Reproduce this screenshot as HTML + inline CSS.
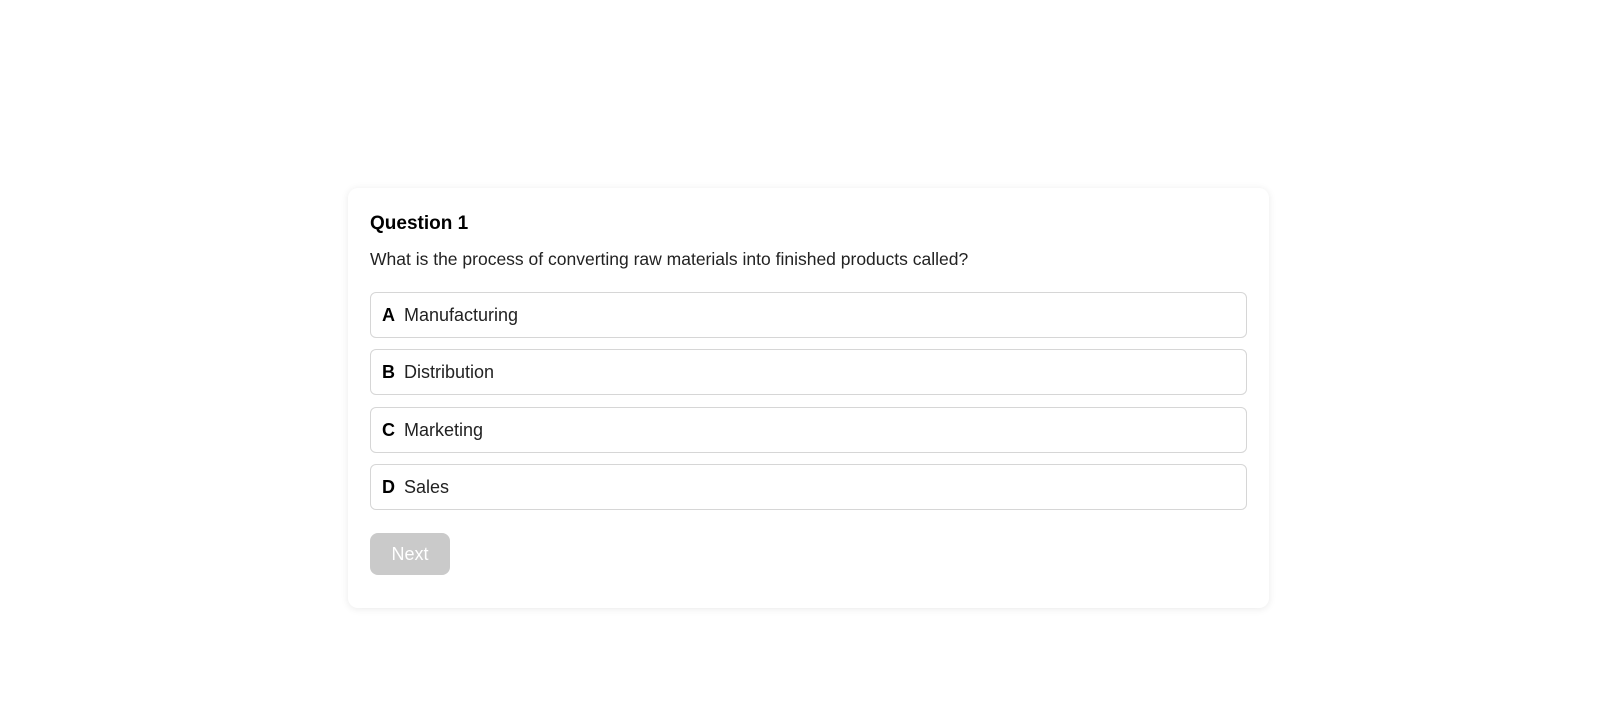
<!DOCTYPE html>
<html><head><style>
body{margin:0;background:#fff;font-family:"Liberation Sans",sans-serif;}
.card{position:absolute;left:348px;top:188px;width:921px;height:420px;background:#fff;border-radius:10px;box-shadow:0 1px 8px rgba(0,0,0,0.09);}
h2{position:absolute;left:22px;top:25px;margin:0;font-size:19px;font-weight:bold;color:#000;}
.q{position:absolute;left:22px;top:61px;font-size:17.5px;color:#222;}
.opt{position:absolute;left:22px;width:875px;height:44px;border:1px solid #d6d6d6;border-radius:6px;font-size:18px;color:#222;line-height:44px;}
.opt b{display:inline-block;margin-left:11px;margin-right:9px;color:#000;}
.btn{position:absolute;left:22px;top:345px;width:80px;height:42px;background:#cacaca;border-radius:8px;color:#fff;font-size:18px;text-align:center;line-height:42px;}
</style></head><body>
<div class="card">
<h2>Question 1</h2>
<div class="q">What is the process of converting raw materials into finished products called?</div>
<div class="opt" style="top:104px"><b>A</b>Manufacturing</div>
<div class="opt" style="top:161px"><b>B</b>Distribution</div>
<div class="opt" style="top:219px"><b>C</b>Marketing</div>
<div class="opt" style="top:276px"><b>D</b>Sales</div>
<div class="btn">Next</div>
</div>
</body></html>
